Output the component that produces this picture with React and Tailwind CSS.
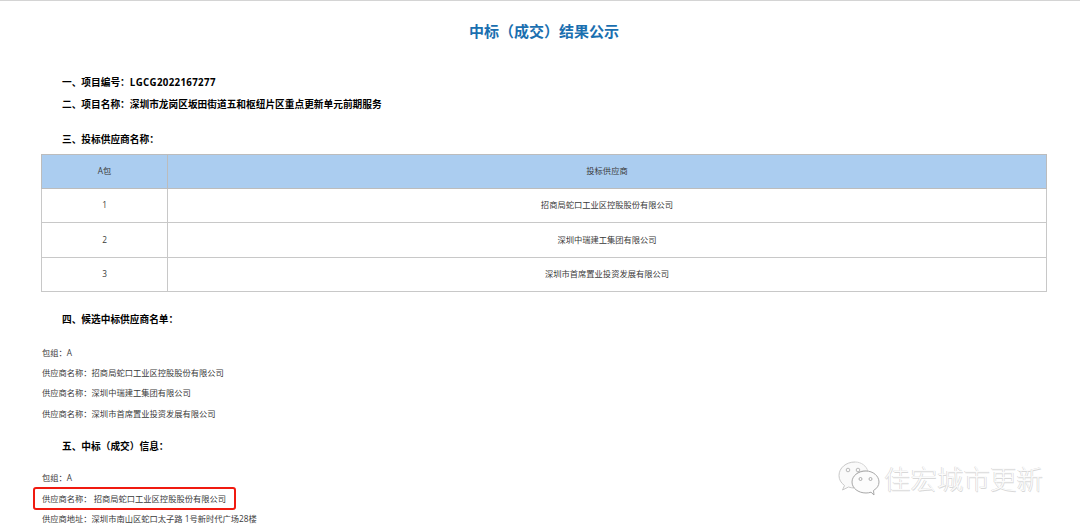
const cjk = { fontFamily: '"Open Sans", "Noto Sans CJK SC", sans-serif' };

function Heading({ children, className = "" }) {
  return <p className={`pl-[62px] text-[9.7px] leading-[14px] font-bold text-black ${className}`}>{children}</p>;
}

function Line({ children, className = "" }) {
  return <p className={`pl-[42px] text-[8.27px] leading-[12px] text-[#3a3a3a] ${className}`}>{children}</p>;
}

const rows = [
  ["1", "招商局蛇口工业区控股股份有限公司"],
  ["2", "深圳中瑞建工集团有限公司"],
  ["3", "深圳市首席置业投资发展有限公司"],
];

function Watermark() {
  return (
    <div className="absolute left-[837px] top-[459px] flex items-center gap-[3px]">
      <svg width="44" height="38" viewBox="0 0 44 38" fill="none">
        <path d="M18 2C9 2 2 8 2 15.500C2 19.500 4 23 7.500 25.500L5.500 30L11.500 27C13.500 27.600 15 28 17 28" fill="#fafafa" stroke="#c9c9c9" strokeWidth="1" />
        <path d="M17 28C14 18 19 11 27 11C29 11 30 11.200 31 11.500C29.500 6 24.500 2 18 2" fill="#fafafa" stroke="#d5d5d5" strokeWidth="1" />
        <path d="M29 11C21 11 15 16 15 22C15 28 21 33 29 33C31 33 32.500 32.700 34 32.200L37 35L36.500 30.500C40 28.500 42 25.500 42 22C42 16 36 11 29 11Z" fill="#fcfcfc" stroke="#a8a8a8" strokeWidth="1" />
        <circle cx="11" cy="10" r="1.800" stroke="#aaa" strokeWidth="0.800" />
        <circle cx="21" cy="10" r="1.800" stroke="#aaa" strokeWidth="0.800" />
        <circle cx="23.500" cy="19" r="1.500" stroke="#999" strokeWidth="0.800" />
        <circle cx="33.500" cy="19" r="1.500" stroke="#999" strokeWidth="0.800" />
      </svg>
      <span className="text-[26.500px] leading-none font-light text-[#fbfbfb] [text-shadow:-0.500px_-0.500px_0_#d0d0d0,0.500px_0.500px_0_#d8d8d8]">佳宏城市更新</span>
    </div>
  );
}

export default function App() {
  return (
    <div style={cjk} className="relative h-[528px] w-[1080px] overflow-hidden border-t border-[#d4d4d4] bg-white">
      <h1 className="mt-[21px] pl-[8px] text-center text-[15px] leading-[18px] font-bold text-[#1a6fb0]">中标（成交）结果公示</h1>

      <Heading className="mt-[36px]">一、项目编号：<span className="tracking-[0.350px]">LGCG2022167277</span></Heading>
      <Heading className="mt-[8px]">二、项目名称：深圳市龙岗区坂田街道五和枢纽片区重点更新单元前期服务</Heading>
      <Heading className="mt-[21px]">三、投标供应商名称：</Heading>

      <div className="mt-[7px] px-[41px] pr-[33px]">
        <table className="w-[1006px] table-fixed border-collapse text-center text-[8.27px] text-[#3a3a3a]">
          <thead>
            <tr className="h-[34px] bg-[#abcdf0]">
              <th className="w-[126px] border border-[#bcbcbc] font-normal">A包</th>
              <th className="border border-[#bcbcbc] font-normal">投标供应商</th>
            </tr>
          </thead>
          <tbody>
            {rows.map(([n, name]) => (
              <tr key={n} className="h-[34.300px]">
                <td className="border border-[#c8c8c8]">{n}</td>
                <td className="border border-[#c8c8c8]">{name}</td>
              </tr>
            ))}
          </tbody>
        </table>
      </div>

      <Heading className="mt-[21px]">四、候选中标供应商名单：</Heading>

      <Line className="mt-[20px]">包组：A</Line>
      <Line className="mt-[8px]">供应商名称：招商局蛇口工业区控股股份有限公司</Line>
      <Line className="mt-[8.500px]">供应商名称：深圳中瑞建工集团有限公司</Line>
      <Line className="mt-[8.500px]">供应商名称：深圳市首席置业投资发展有限公司</Line>

      <Heading className="mt-[20.500px]">五、中标（成交）信息：</Heading>

      <Line className="mt-[18px]">包组：A</Line>
      <div className="relative mt-[8.500px]">
        <Line>供应商名称：&nbsp;招商局蛇口工业区控股股份有限公司</Line>
        <div className="absolute left-[33px] top-[-6px] h-[23px] w-[203px] rounded-[3px] border-2 border-[#f01a10]" />
      </div>
      <Line className="mt-[8.500px]">供应商地址：深圳市南山区蛇口太子路 1号新时代广场28楼</Line>

      <Watermark />
    </div>
  );
}
